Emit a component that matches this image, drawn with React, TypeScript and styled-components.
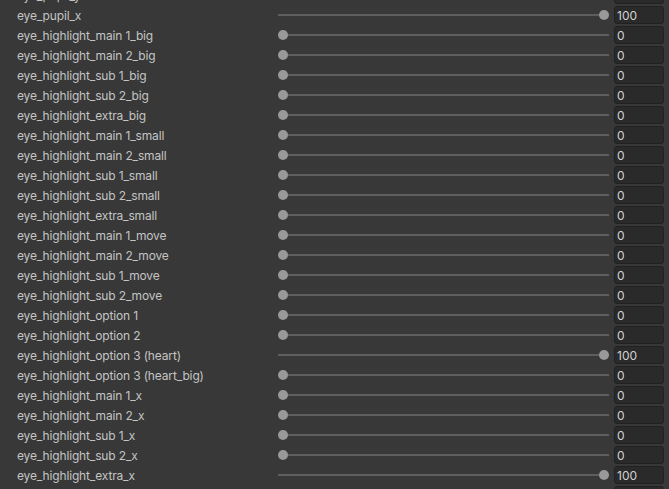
import React from 'react';
import styled, {createGlobalStyle} from 'styled-components';

const GlobalStyle = createGlobalStyle`
  html, body {
    margin: 0;
    padding: 0;
    background: #383838;
    overflow: hidden;
  }
  body {
    font-family: Inter, "Noto Sans", "Liberation Sans", sans-serif;
  }
`;

type BlendShape = {
  name: string;
  value: number;
};

const shapes: BlendShape[] = [
  {name: 'eye_pupil_y', value: 0},
  {name: 'eye_pupil_x', value: 100},
  {name: 'eye_highlight_main 1_big', value: 0},
  {name: 'eye_highlight_main 2_big', value: 0},
  {name: 'eye_highlight_sub 1_big', value: 0},
  {name: 'eye_highlight_sub 2_big', value: 0},
  {name: 'eye_highlight_extra_big', value: 0},
  {name: 'eye_highlight_main 1_small', value: 0},
  {name: 'eye_highlight_main 2_small', value: 0},
  {name: 'eye_highlight_sub 1_small', value: 0},
  {name: 'eye_highlight_sub 2_small', value: 0},
  {name: 'eye_highlight_extra_small', value: 0},
  {name: 'eye_highlight_main 1_move', value: 0},
  {name: 'eye_highlight_main 2_move', value: 0},
  {name: 'eye_highlight_sub 1_move', value: 0},
  {name: 'eye_highlight_sub 2_move', value: 0},
  {name: 'eye_highlight_option 1', value: 0},
  {name: 'eye_highlight_option 2', value: 0},
  {name: 'eye_highlight_option 3 (heart)', value: 100},
  {name: 'eye_highlight_option 3 (heart_big)', value: 0},
  {name: 'eye_highlight_main 1_x', value: 0},
  {name: 'eye_highlight_main 2_x', value: 0},
  {name: 'eye_highlight_sub 1_x', value: 0},
  {name: 'eye_highlight_sub 2_x', value: 0},
  {name: 'eye_highlight_extra_x', value: 100},
  {name: 'eye_highlight_main 1_y', value: 0},
];

export default function App() {
  return (
    <>
      <GlobalStyle />
      <Inspector>
        {shapes.map(shape => (
          <Row key={shape.name}>
            <Label>{shape.name}</Label>
            <Slider>
              <Track />
              <ThumbLane>
                <Thumb style={{left: `${shape.value}%`}} />
              </ThumbLane>
            </Slider>
            <ValueField>{shape.value}</ValueField>
          </Row>
        ))}
      </Inspector>
    </>
  );
}

const Inspector = styled.div`
  display: flex;
  flex-direction: column;
  width: 669px;
  margin-top: -15px;
`;

const Row = styled.div`
  display: flex;
  flex-direction: row;
  align-items: center;
  height: 20px;
  padding-left: 17px;
  padding-right: 5px;
`;

const Label = styled.div`
  width: 261px;
  flex-shrink: 0;
  color: #c4c4c4;
  font-size: 12px;
  letter-spacing: -0.15px;
  white-space: nowrap;
  overflow: hidden;
  line-height: 20px;
  padding-top: 1px;
`;

const Slider = styled.div`
  position: relative;
  width: 331px;
  height: 20px;
  flex-shrink: 0;
  display: flex;
  align-items: center;
  margin-right: 5px;
`;

const Track = styled.div`
  width: 100%;
  height: 2px;
  background: #5e5e5e;
`;

const ThumbLane = styled.div`
  position: absolute;
  top: 0;
  bottom: 0;
  left: 5px;
  right: 5px;
`;

const Thumb = styled.div`
  position: absolute;
  top: 5px;
  width: 10px;
  height: 10px;
  border-radius: 50%;
  background: #999999;
  transform: translateX(-50%);
`;

const ValueField = styled.div`
  box-sizing: border-box;
  width: 51px;
  height: 18px;
  background: #2a2a2a;
  border: 1px solid #212121;
  border-radius: 3px;
  color: #d2d2d2;
  font-size: 12px;
  line-height: 17px;
  padding-left: 2px;
`;
